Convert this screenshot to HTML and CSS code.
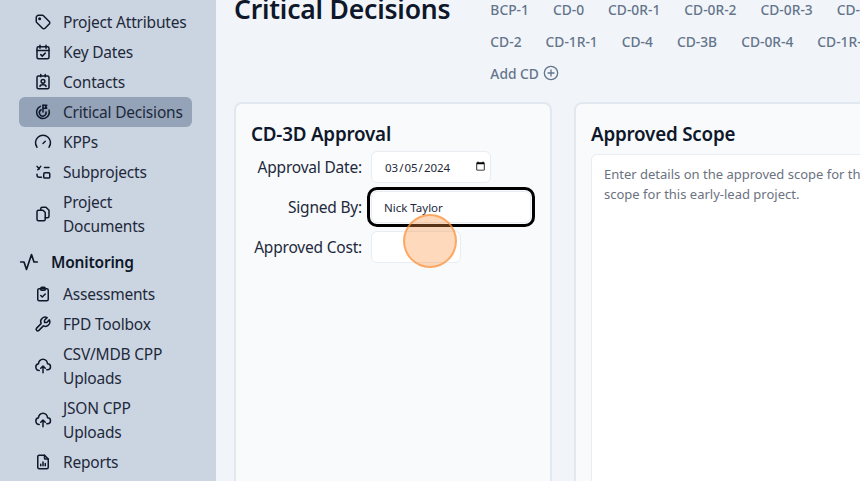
FILE: index.html
```html
<!DOCTYPE html>
<html lang="en">
<head>
<meta charset="utf-8">
<title>Critical Decisions</title>
<link rel="stylesheet" href="styles.css">
</head>
<body>
<aside class="sidebar">
  <nav class="nav">
    <a class="item wide"><svg class="ico" viewBox="0 0 24 24"><circle cx="7.5" cy="7.5" r="1"/><path d="M3 6v5.2a2 2 0 0 0 .6 1.4l7.7 7.7a2.4 2.4 0 0 0 3.4 0l5.6-5.6a2.4 2.4 0 0 0 0-3.4l-7.7-7.7a2 2 0 0 0-1.400-.6H6a3 3 0 0 0-3 3z"/></svg><span>Project Attributes</span></a>
    <a class="item"><svg class="ico" viewBox="0 0 24 24"><rect x="4" y="5" width="16" height="16" rx="2"/><path d="M16 3v4M8 3v4M4 10h16M9 15.500l2 2 4-4"/></svg><span>Key Dates</span></a>
    <a class="item"><svg class="ico" viewBox="0 0 24 24"><rect x="4" y="4" width="16" height="17" rx="2"/><path d="M9 2v3M15 2v3"/><circle cx="12" cy="11" r="2.500"/><path d="M8 18c0-3 8-3 8 0"/></svg><span>Contacts</span></a>
    <a class="item active wide"><svg class="ico" viewBox="0 0 24 24"><path d="M12 3v9"/><path d="M12 3h5l-1.500 2 1.500 2H12"/><path d="M8.500 4.500a8.500 8.500 0 1 0 11.500 5"/><path d="M9.500 9a4.500 4.500 0 1 0 6.500 3"/></svg><span>Critical Decisions</span></a>
    <a class="item"><svg class="ico" viewBox="0 0 24 24"><path d="M4 19a10 10 0 1 1 16 0"/><path d="M12 14l3-3"/></svg><span>KPPs</span></a>
    <a class="item"><svg class="ico" viewBox="0 0 24 24"><path d="M9 4.500 5 9M4 4.500 7 8"/><path d="M14 6h6M4 15v1a3 3 0 0 0 3 3h3"/><rect x="13" y="13" width="8" height="7" rx="1.500"/></svg><span>Subprojects</span></a>
    <a class="item"><svg class="ico" viewBox="0 0 24 24"><path d="M9 7V5a2 2 0 0 1 2-2h5l4 4v8a2 2 0 0 1-2 2h-3"/><path d="M6 7h6l3 3v9a2 2 0 0 1-2 2H6a2 2 0 0 1-2-2V9a2 2 0 0 1 2-2z"/></svg><span>Project Documents</span></a>
    <div class="group"><svg class="ico-lg" viewBox="0 0 24 24"><path d="M2 12h4l3 9 6-18 3 9h4"/></svg><span>Monitoring</span></div>
    <a class="item"><svg class="ico" viewBox="0 0 24 24"><rect x="5" y="5" width="14" height="16" rx="2"/><rect x="9" y="3" width="6" height="4" rx="1.500"/><path d="M9 14l2 2 4-4"/></svg><span>Assessments</span></a>
    <a class="item"><svg class="ico" viewBox="0 0 24 24"><path d="M7 10h3V7L6.500 3.500a6 6 0 0 1 8 8l6 6a2 2 0 0 1-3 3l-6-6a6 6 0 0 1-8-8L7 10" transform="matrix(-1 0 0 1 24 0)"/></svg><span>FPD Toolbox</span></a>
    <a class="item"><svg class="ico" viewBox="0 0 24 24"><path d="M7 18a4.500 4.500 0 0 1-1-8.900A6 6 0 0 1 18 9a4 4 0 0 1 0 8h-1"/><path d="M9 15l3-3 3 3M12 12v9"/></svg><span>CSV/MDB CPP Uploads</span></a>
    <a class="item"><svg class="ico" viewBox="0 0 24 24"><path d="M7 18a4.500 4.500 0 0 1-1-8.900A6 6 0 0 1 18 9a4 4 0 0 1 0 8h-1"/><path d="M9 15l3-3 3 3M12 12v9"/></svg><span>JSON CPP Uploads</span></a>
    <a class="item"><svg class="ico" viewBox="0 0 24 24"><path d="M14 3v4a1 1 0 0 0 1 1h4"/><path d="M17 21H7a2 2 0 0 1-2-2V5a2 2 0 0 1 2-2h7l5 5v11a2 2 0 0 1-2 2z"/><path d="M9 17v-2M12 17v-5M15 17v-3"/></svg><span>Reports</span></a>
  </nav>
</aside>
<main class="main">
  <header class="head">
    <h1 class="title">Critical Decisions</h1>
    <div class="tabs">
      <div class="tab-row"><a>BCP-1</a><a>CD-0</a><a>CD-0R-1</a><a>CD-0R-2</a><a>CD-0R-3</a><a>CD-1</a></div>
      <div class="tab-row"><a>CD-2</a><a>CD-1R-1</a><a>CD-4</a><a>CD-3B</a><a>CD-0R-4</a><a>CD-1R-2</a></div>
      <div class="tab-row"><a class="add">Add CD <svg class="plus" viewBox="0 0 24 24"><circle cx="12" cy="12" r="10"/><path d="M12 7.500v9M7.500 12h9"/></svg></a></div>
    </div>
  </header>
  <section class="cards">
    <div class="card approval">
      <h2 class="card-title">CD-3D Approval</h2>
      <div class="form">
        <label class="lbl">Approval Date:</label>
        <input class="field date" type="date" value="2024-03-05">
        <label class="lbl">Signed By:</label>
        <input class="field text" type="text" value="Nick Taylor">
        <label class="lbl">Approved Cost:</label>
        <input class="field cost" type="text">
      </div>
    </div>
    <div class="card scope">
      <h2 class="card-title">Approved Scope</h2>
      <textarea class="area" placeholder="Enter details on the approved scope for this Critical Decision, including the full&#10;scope for this early-lead project."></textarea>
    </div>
  </section>
</main>
<div class="click"></div>
</body>
</html>
```

FILE: styles.css
```css
* { box-sizing: border-box; }
html, body { margin: 0; height: 100%; }
body {
  width: 860px;
  height: 481px;
  overflow: hidden;
  display: flex;
  position: relative;
  background: #f1f5f9;
  font-family: "Noto Sans", "Open Sans", sans-serif;
  color: #0f172a;
}
.sidebar {
  width: 216px;
  flex: none;
  height: 481px;
  overflow: hidden;
  background: #cbd5e1;
}
.nav {
  display: flex;
  flex-direction: column;
  padding: 7px 24px 0 19px;
}
.item {
  display: flex;
  align-items: center;
  gap: 11px;
  padding: 3px 8px 3px 15px;
  border-radius: 6px;
  font-size: 15.500px;
  line-height: 24px;
  color: #1e293b;
  letter-spacing: -0.2px;
}
.item span { max-width: 120px; }
.item.wide span { max-width: none; white-space: nowrap; }
.item.active { background: #94a3b8; }
.ico {
  width: 18px;
  height: 18px;
  flex: none;
  fill: none;
  stroke: #0f172a;
  stroke-width: 2;
  stroke-linecap: round;
  stroke-linejoin: round;
}
.group {
  display: flex;
  align-items: center;
  gap: 12px;
  height: 38px;
  padding-top: 4px;
  font-size: 15.500px;
  font-weight: 600;
  letter-spacing: -0.2px;
  color: #0f172a;
}
.ico-lg {
  width: 20px;
  height: 20px;
  flex: none;
  fill: none;
  stroke: #0f172a;
  stroke-width: 2;
  stroke-linecap: round;
  stroke-linejoin: round;
}
.main {
  flex: 1;
  min-width: 0;
  padding: 0 0 0 18px;
  overflow: hidden;
}
.head {
  display: flex;
  height: 102px;
  gap: 40px;
}
.title {
  margin: -9px 0 0;
  font-size: 26.500px;
  line-height: 36px;
  font-weight: 600;
  white-space: nowrap;
  letter-spacing: -0.2px;
  color: #0f172a;
}
.tabs {
  display: flex;
  flex-direction: column;
  gap: 8px;
  margin-top: -3px;
  white-space: nowrap;
}
.tab-row {
  display: flex;
  gap: 24px;
  height: 24px;
  align-items: center;
  font-size: 13.800px;
  font-weight: 500;
  color: #64748b;
}
.add { display: flex; align-items: center; gap: 4px; }
.plus {
  width: 16px;
  height: 16px;
  fill: none;
  stroke: #64748b;
  stroke-width: 2;
  stroke-linecap: round;
}
.cards {
  display: flex;
  gap: 22px;
  align-items: flex-start;
  width: 900px;
}
.card {
  height: 440px;
  background: #f8fafc;
  border: 2px solid #e2e8f0;
  border-radius: 8px;
  padding: 17px 15px;
  flex: none;
}
.approval { width: 318px; }
.scope { width: 560px; }
.card-title {
  margin: 0;
  font-size: 18.800px;
  line-height: 26px;
  font-weight: 600;
  letter-spacing: -0.2px;
  color: #0f172a;
}
.form {
  display: grid;
  grid-template-columns: 111px auto;
  column-gap: 9px;
  row-gap: 8px;
  align-items: center;
  justify-items: start;
  margin-top: 4px;
}
.lbl {
  justify-self: end;
  white-space: nowrap;
  font-size: 15.500px;
  letter-spacing: -0.2px;
  color: #1e293b;
}
.field {
  height: 32px;
  background: #fff;
  border: 1px solid #e8edf3;
  border-radius: 6px;
  padding: 0 12px;
  font-family: inherit;
  font-size: 11.500px;
  color: #1e293b;
}
.date { width: 120px; padding-right: 2px; }
.text {
  width: 160px;
  outline: 3px solid #000;
  outline-offset: 1px;
}
.cost { width: 90px; }
.area {
  display: block;
  width: 530px;
  height: 400px;
  margin-top: 7px;
  padding: 9px 12px;
  background: #fff;
  border: 1px solid #e8edf3;
  border-radius: 6px;
  font-family: inherit;
  font-size: 13px;
  line-height: 20px;
  resize: none;
}
.area::placeholder { color: #6b7280; }
.click {
  position: absolute;
  left: 403px;
  top: 214px;
  width: 54px;
  height: 54px;
  border-radius: 50%;
  background: rgba(251, 146, 60, 0.35);
  border: 2px solid rgba(251, 146, 60, 0.7);
}
```
